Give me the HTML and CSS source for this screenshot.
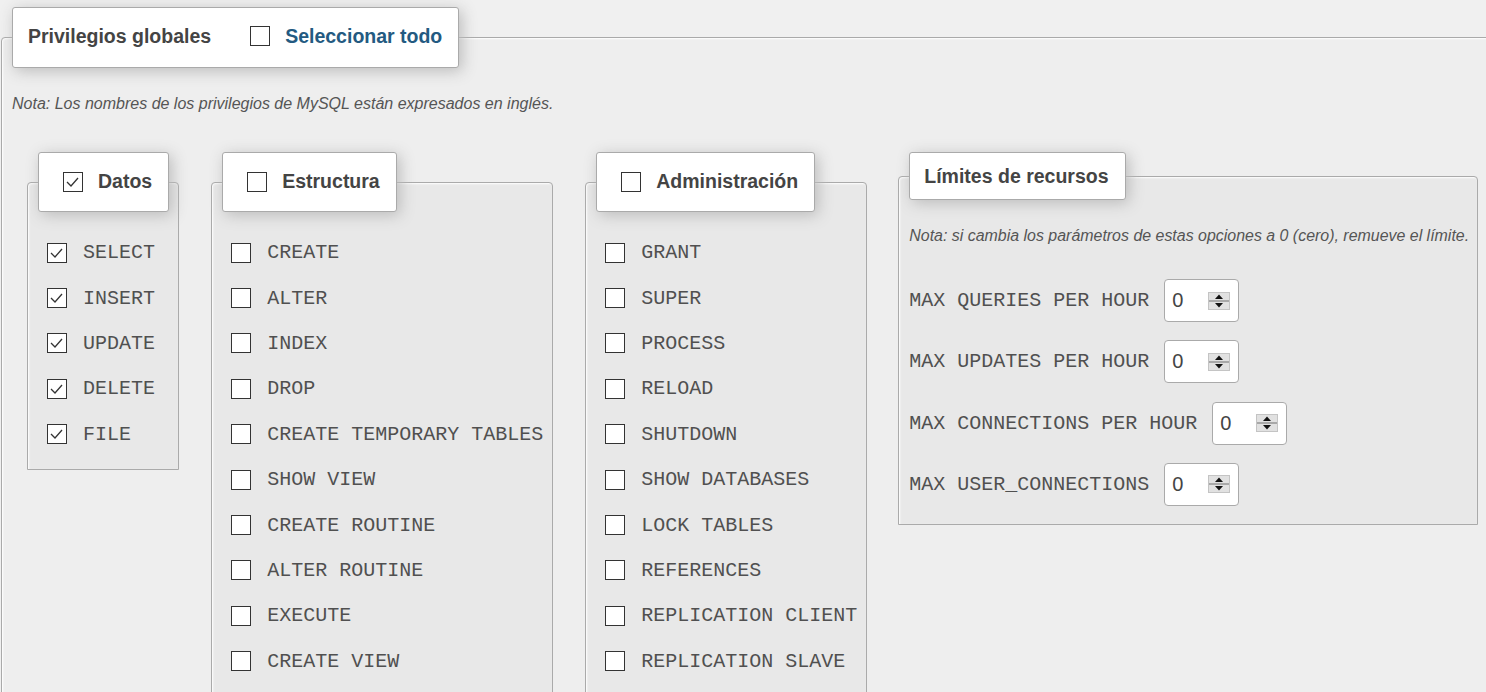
FILE: index.html
```html
<!DOCTYPE html>
<html lang="es">
<head>
<meta charset="utf-8">
<title>Privilegios globales</title>
<link rel="stylesheet" href="styles.css">
</head>
<body>
<fieldset class="outer">
  <legend class="legend legend-main">
    <span class="legend-inner">
      <span class="legend-title">Privilegios globales</span>
      <span class="cb"><svg width="20" height="20" viewBox="0 0 20 20"><rect x="0.5" y="0.5" width="19" height="19" fill="#fff" stroke="#333"/></svg></span>
      <span class="select-all">Seleccionar todo</span>
    </span>
  </legend>
  <p class="note">Nota: Los nombres de los privilegios de MySQL están expresados en inglés.</p>

  <div class="groups">
    <fieldset class="group">
      <legend class="legend legend-cb">
        <span class="legend-inner">
          <span class="cb"><svg width="20" height="20" viewBox="0 0 20 20"><rect x="0.5" y="0.5" width="19" height="19" fill="#fff" stroke="#333"/><polyline points="4,10 8,14 15,6" fill="none" stroke="#333" stroke-width="1.3"/></svg></span>
          <span class="legend-title">Datos</span>
        </span>
      </legend>
      <div class="items">
        <div class="item"><span class="cb"><svg width="20" height="20" viewBox="0 0 20 20"><rect x="0.5" y="0.5" width="19" height="19" fill="#fff" stroke="#333"/><polyline points="4,10 8,14 15,6" fill="none" stroke="#333" stroke-width="1.3"/></svg></span><code>SELECT</code></div>
        <div class="item"><span class="cb"><svg width="20" height="20" viewBox="0 0 20 20"><rect x="0.5" y="0.5" width="19" height="19" fill="#fff" stroke="#333"/><polyline points="4,10 8,14 15,6" fill="none" stroke="#333" stroke-width="1.3"/></svg></span><code>INSERT</code></div>
        <div class="item"><span class="cb"><svg width="20" height="20" viewBox="0 0 20 20"><rect x="0.5" y="0.5" width="19" height="19" fill="#fff" stroke="#333"/><polyline points="4,10 8,14 15,6" fill="none" stroke="#333" stroke-width="1.3"/></svg></span><code>UPDATE</code></div>
        <div class="item"><span class="cb"><svg width="20" height="20" viewBox="0 0 20 20"><rect x="0.5" y="0.5" width="19" height="19" fill="#fff" stroke="#333"/><polyline points="4,10 8,14 15,6" fill="none" stroke="#333" stroke-width="1.3"/></svg></span><code>DELETE</code></div>
        <div class="item"><span class="cb"><svg width="20" height="20" viewBox="0 0 20 20"><rect x="0.5" y="0.5" width="19" height="19" fill="#fff" stroke="#333"/><polyline points="4,10 8,14 15,6" fill="none" stroke="#333" stroke-width="1.3"/></svg></span><code>FILE</code></div>
      </div>
    </fieldset>

    <fieldset class="group">
      <legend class="legend legend-cb">
        <span class="legend-inner">
          <span class="cb"><svg width="20" height="20" viewBox="0 0 20 20"><rect x="0.5" y="0.5" width="19" height="19" fill="#fff" stroke="#333"/></svg></span>
          <span class="legend-title">Estructura</span>
        </span>
      </legend>
      <div class="items">
        <div class="item"><span class="cb"><svg width="20" height="20" viewBox="0 0 20 20"><rect x="0.5" y="0.5" width="19" height="19" fill="#fff" stroke="#333"/></svg></span><code>CREATE</code></div>
        <div class="item"><span class="cb"><svg width="20" height="20" viewBox="0 0 20 20"><rect x="0.5" y="0.5" width="19" height="19" fill="#fff" stroke="#333"/></svg></span><code>ALTER</code></div>
        <div class="item"><span class="cb"><svg width="20" height="20" viewBox="0 0 20 20"><rect x="0.5" y="0.5" width="19" height="19" fill="#fff" stroke="#333"/></svg></span><code>INDEX</code></div>
        <div class="item"><span class="cb"><svg width="20" height="20" viewBox="0 0 20 20"><rect x="0.5" y="0.5" width="19" height="19" fill="#fff" stroke="#333"/></svg></span><code>DROP</code></div>
        <div class="item"><span class="cb"><svg width="20" height="20" viewBox="0 0 20 20"><rect x="0.5" y="0.5" width="19" height="19" fill="#fff" stroke="#333"/></svg></span><code>CREATE TEMPORARY TABLES</code></div>
        <div class="item"><span class="cb"><svg width="20" height="20" viewBox="0 0 20 20"><rect x="0.5" y="0.5" width="19" height="19" fill="#fff" stroke="#333"/></svg></span><code>SHOW VIEW</code></div>
        <div class="item"><span class="cb"><svg width="20" height="20" viewBox="0 0 20 20"><rect x="0.5" y="0.5" width="19" height="19" fill="#fff" stroke="#333"/></svg></span><code>CREATE ROUTINE</code></div>
        <div class="item"><span class="cb"><svg width="20" height="20" viewBox="0 0 20 20"><rect x="0.5" y="0.5" width="19" height="19" fill="#fff" stroke="#333"/></svg></span><code>ALTER ROUTINE</code></div>
        <div class="item"><span class="cb"><svg width="20" height="20" viewBox="0 0 20 20"><rect x="0.5" y="0.5" width="19" height="19" fill="#fff" stroke="#333"/></svg></span><code>EXECUTE</code></div>
        <div class="item"><span class="cb"><svg width="20" height="20" viewBox="0 0 20 20"><rect x="0.5" y="0.5" width="19" height="19" fill="#fff" stroke="#333"/></svg></span><code>CREATE VIEW</code></div>
      </div>
    </fieldset>

    <fieldset class="group">
      <legend class="legend legend-cb">
        <span class="legend-inner">
          <span class="cb"><svg width="20" height="20" viewBox="0 0 20 20"><rect x="0.5" y="0.5" width="19" height="19" fill="#fff" stroke="#333"/></svg></span>
          <span class="legend-title">Administración</span>
        </span>
      </legend>
      <div class="items">
        <div class="item"><span class="cb"><svg width="20" height="20" viewBox="0 0 20 20"><rect x="0.5" y="0.5" width="19" height="19" fill="#fff" stroke="#333"/></svg></span><code>GRANT</code></div>
        <div class="item"><span class="cb"><svg width="20" height="20" viewBox="0 0 20 20"><rect x="0.5" y="0.5" width="19" height="19" fill="#fff" stroke="#333"/></svg></span><code>SUPER</code></div>
        <div class="item"><span class="cb"><svg width="20" height="20" viewBox="0 0 20 20"><rect x="0.5" y="0.5" width="19" height="19" fill="#fff" stroke="#333"/></svg></span><code>PROCESS</code></div>
        <div class="item"><span class="cb"><svg width="20" height="20" viewBox="0 0 20 20"><rect x="0.5" y="0.5" width="19" height="19" fill="#fff" stroke="#333"/></svg></span><code>RELOAD</code></div>
        <div class="item"><span class="cb"><svg width="20" height="20" viewBox="0 0 20 20"><rect x="0.5" y="0.5" width="19" height="19" fill="#fff" stroke="#333"/></svg></span><code>SHUTDOWN</code></div>
        <div class="item"><span class="cb"><svg width="20" height="20" viewBox="0 0 20 20"><rect x="0.5" y="0.5" width="19" height="19" fill="#fff" stroke="#333"/></svg></span><code>SHOW DATABASES</code></div>
        <div class="item"><span class="cb"><svg width="20" height="20" viewBox="0 0 20 20"><rect x="0.5" y="0.5" width="19" height="19" fill="#fff" stroke="#333"/></svg></span><code>LOCK TABLES</code></div>
        <div class="item"><span class="cb"><svg width="20" height="20" viewBox="0 0 20 20"><rect x="0.5" y="0.5" width="19" height="19" fill="#fff" stroke="#333"/></svg></span><code>REFERENCES</code></div>
        <div class="item"><span class="cb"><svg width="20" height="20" viewBox="0 0 20 20"><rect x="0.5" y="0.5" width="19" height="19" fill="#fff" stroke="#333"/></svg></span><code>REPLICATION CLIENT</code></div>
        <div class="item"><span class="cb"><svg width="20" height="20" viewBox="0 0 20 20"><rect x="0.5" y="0.5" width="19" height="19" fill="#fff" stroke="#333"/></svg></span><code>REPLICATION SLAVE</code></div>
      </div>
    </fieldset>

    <fieldset class="group limits">
      <legend class="legend legend-plain">Límites de recursos</legend>
      <p class="note note-limits">Nota: si cambia los parámetros de estas opciones a 0 (cero), remueve el límite.</p>
      <div class="limit-rows">
        <div class="limit-row"><code>MAX QUERIES PER HOUR</code><span class="num-input"><span class="num-val">0</span><svg class="spin" width="22" height="18" viewBox="0 0 22 18"><rect x="0.5" y="0.5" width="21" height="17" fill="#e1e1e1" stroke="#c4c4c4"/><polygon points="7,7 15,7 11,2.5" fill="#111"/><rect x="1" y="8" width="20" height="2" fill="#a8a8a8"/><polygon points="7,11 15,11 11,15.5" fill="#111"/></svg></span></div>
        <div class="limit-row"><code>MAX UPDATES PER HOUR</code><span class="num-input"><span class="num-val">0</span><svg class="spin" width="22" height="18" viewBox="0 0 22 18"><rect x="0.5" y="0.5" width="21" height="17" fill="#e1e1e1" stroke="#c4c4c4"/><polygon points="7,7 15,7 11,2.5" fill="#111"/><rect x="1" y="8" width="20" height="2" fill="#a8a8a8"/><polygon points="7,11 15,11 11,15.5" fill="#111"/></svg></span></div>
        <div class="limit-row"><code>MAX CONNECTIONS PER HOUR</code><span class="num-input"><span class="num-val">0</span><svg class="spin" width="22" height="18" viewBox="0 0 22 18"><rect x="0.5" y="0.5" width="21" height="17" fill="#e1e1e1" stroke="#c4c4c4"/><polygon points="7,7 15,7 11,2.5" fill="#111"/><rect x="1" y="8" width="20" height="2" fill="#a8a8a8"/><polygon points="7,11 15,11 11,15.5" fill="#111"/></svg></span></div>
        <div class="limit-row"><code>MAX USER_CONNECTIONS</code><span class="num-input"><span class="num-val">0</span><svg class="spin" width="22" height="18" viewBox="0 0 22 18"><rect x="0.5" y="0.5" width="21" height="17" fill="#e1e1e1" stroke="#c4c4c4"/><polygon points="7,7 15,7 11,2.5" fill="#111"/><rect x="1" y="8" width="20" height="2" fill="#a8a8a8"/><polygon points="7,11 15,11 11,15.5" fill="#111"/></svg></span></div>
      </div>
    </fieldset>
  </div>
</fieldset>
</body>
</html>
```

FILE: styles.css
```css
html {
  overflow: hidden;
}

body {
  margin: 0;
  background: #f0f0f0;
  font-family: "Liberation Sans", Arial, sans-serif;
  color: #444;
}

fieldset {
  margin: 0;
  min-width: 0;
}

.outer {
  margin: 7px 0 0 1px;
  width: 1520px;
  min-height: 760px;
  box-sizing: border-box;
  padding: 0 10px;
  border: 1px solid #aaa;
  border-radius: 4px 4px 0 0;
  background: #eee;
  box-shadow: 1px 1px 2px #fff inset;
}

.legend {
  box-sizing: border-box;
  background: #fff;
  border: 1px solid #aaa;
  border-radius: 3px;
  box-shadow: 3px 3px 15px #bbb;
  font-weight: bold;
  font-size: 19.5px;
  color: #444;
  padding: 0 15px;
}

.legend-main {
  height: 61px;
  padding: 0 16px 3px 15px;
}

.legend-cb {
  height: 60px;
  padding: 0 16px 1px 24px;
}

.legend-plain {
  height: 48px;
  line-height: 46px;
  padding: 0 16px 0 14px;
}

.legend-inner {
  display: flex;
  align-items: center;
  height: 100%;
  gap: 15px;
}

.legend-main .legend-inner .cb {
  margin-left: 24px;
}

.legend-title {
  white-space: nowrap;
}

.select-all {
  color: #235a81;
  white-space: nowrap;
}

.cb {
  display: inline-flex;
  width: 20px;
  height: 20px;
  flex: none;
}

.cb svg {
  display: block;
}

.note {
  margin: 27px 0 0 0;
  font-style: italic;
  font-size: 16px;
  line-height: 18px;
  color: #555;
  white-space: nowrap;
}

.groups {
  display: flex;
  align-items: flex-start;
  margin: 39px 0 0 15px;
  gap: 32px;
}

.group {
  padding: 0 9px 0 10px;
  border: 1px solid #aaa;
  border-radius: 4px 4px 0 0;
  background: #e8e8e8;
  box-shadow: 1px 1px 2px #fff inset;
}

.items {
  padding: 18px 0 12px 9px;
}

.item {
  display: flex;
  align-items: center;
  gap: 16px;
  height: 45.4px;
}

code {
  font-family: "Liberation Mono", "Courier New", monospace;
  font-size: 20px;
  color: #505050;
  white-space: pre;
}

.limits {
  margin-left: -1px;
  padding: 0 8px 0 10px;
}

.note-limits {
  margin: 27px 0 0 0;
  font-size: 15.95px;
}

.limit-rows {
  display: flex;
  flex-direction: column;
  gap: 18.3px;
  padding: 34px 0 18px 0;
}

.limit-row {
  display: flex;
  align-items: center;
  gap: 15px;
  height: 43px;
}

.num-input {
  box-sizing: border-box;
  display: flex;
  align-items: center;
  justify-content: space-between;
  width: 75px;
  height: 43px;
  padding: 0 8px 0 7px;
  background: #fff;
  border: 1px solid #aaa;
  border-radius: 4px;
}

.num-val {
  font-size: 20px;
  color: #444;
}

.spin {
  display: block;
}
```
